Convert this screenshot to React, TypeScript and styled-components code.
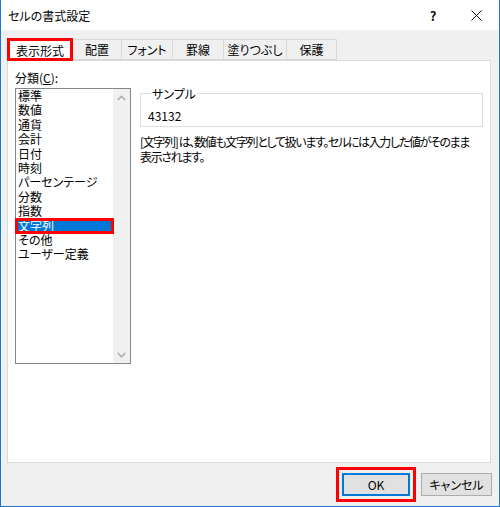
import React from "react";
import styled, { createGlobalStyle } from "styled-components";

const Global = createGlobalStyle`
  html, body { margin: 0; padding: 0; background: #ffffff; }
  body {
    font-family: "Noto Sans CJK JP", "Noto Sans", sans-serif;
    font-size: 12px;
    color: #000000;
    font-feature-settings: "palt";
  }
  * { box-sizing: border-box; }
  #root { width: 500px; height: 507px; }
`;

const Window = styled.div`
  width: 500px;
  height: 507px;
  border: 1px solid #1979d1;
  border-top: none;
  background: #f0f0f0;
  display: flex;
  flex-direction: column;
`;

const TitleBar = styled.div`
  height: 30px;
  flex: none;
  background: #ffffff;
  display: flex;
  align-items: center;
  padding-left: 7px;
`;

const Title = styled.div`
  flex: 1;
  line-height: 15px;
`;

const CaptionButton = styled.div<{ $w: number }>`
  width: ${(p) => p.$w}px;
  height: 30px;
  display: flex;
  align-items: center;
  justify-content: center;
  font-size: 13px;
  font-weight: 700;
  color: #111;
`;

const Content = styled.div`
  flex: 1;
  display: flex;
  flex-direction: column;
  padding: 8px 8px 0 6px;
  min-height: 0;
`;

const TabStrip = styled.div`
  display: flex;
  align-items: flex-end;
  position: relative;
  z-index: 1;
`;

const Tab = styled.div<{ $w: number; $active?: boolean; $marked?: boolean }>`
  width: ${(p) => p.$w}px;
  height: ${(p) => (p.$active ? 23 : 21)}px;
  margin-bottom: ${(p) => (p.$active ? -1 : 0)}px;
  margin-left: -1px;
  &:first-child { margin-left: 0; }
  border: 1px solid #d9d9d9;
  border-bottom: ${(p) => (p.$active ? "none" : "1px solid #d9d9d9")};
  background: ${(p) => (p.$active ? "#ffffff" : "#f0f0f0")};
  position: relative;
  z-index: ${(p) => (p.$active ? 2 : 1)};
  display: flex;
  align-items: center;
  justify-content: center;
  line-height: 15px;
  outline: ${(p) => (p.$marked ? "3px solid #ff0000" : "none")};
  outline-offset: -3px;
`;

const Panel = styled.div`
  flex: 1;
  background: #ffffff;
  border: 1px solid #d9d9d9;
  display: flex;
  gap: 9px;
  padding: 9px 7px 0 7px;
`;

const LeftColumn = styled.div`
  flex: none;
  width: 116px;
  display: flex;
  flex-direction: column;
`;

const FieldLabel = styled.div`
  line-height: 15px;
  height: 15px;
  margin-bottom: 3px;
`;

const ListBox = styled.div`
  height: 276px;
  border: 1px solid #828790;
  background: #ffffff;
  display: flex;
`;

const ListItems = styled.div`
  flex: 1;
  display: flex;
  flex-direction: column;
`;

const ListItem = styled.div<{ $selected?: boolean; $marked?: boolean }>`
  height: 14.4px;
  line-height: 14.4px;
  padding-left: 2px;
  white-space: nowrap;
  background: ${(p) => (p.$selected ? "#0078d7" : "transparent")};
  color: ${(p) => (p.$selected ? "#ffffff" : "#000000")};
  outline: ${(p) => (p.$marked ? "3px solid #ff0000" : "none")};
  outline-offset: -2px;
  position: relative;
`;

const ScrollTrack = styled.div`
  width: 17px;
  background: #f0f0f0;
  display: flex;
  flex-direction: column;
  justify-content: space-between;
`;

const ScrollArrow = styled.div`
  width: 17px;
  height: 17px;
  display: flex;
  align-items: center;
  justify-content: center;
`;

const RightColumn = styled.div`
  flex: 1;
  min-width: 0;
  padding-top: 16px;
  display: flex;
  flex-direction: column;
`;

const GroupBox = styled.fieldset`
  margin: 0;
  min-width: 0;
  border: 1px solid #dcdcdc;
  padding: 7px 6px 3px 7px;
`;

const GroupTitle = styled.legend`
  padding: 0 1px;
  margin-left: 3px;
  line-height: 15px;
`;

const SampleValue = styled.div`
  line-height: 15px;
`;

const Description = styled.div`
  margin-top: 7px;
  line-height: 15px;
  white-space: nowrap;
  letter-spacing: -1.35px;
`;

const Footer = styled.div`
  height: 43px;
  flex: none;
  display: flex;
  justify-content: flex-end;
  align-items: flex-start;
  padding: 10px 7px 0 0;
  gap: 11px;
`;

const Button = styled.button<{ $w: number; $default?: boolean; $marked?: boolean }>`
  width: ${(p) => p.$w}px;
  height: 23px;
  margin: 0;
  padding: 0;
  font: inherit;
  color: #000;
  background: #e1e1e1;
  border: 1px solid ${(p) => (p.$default ? "#0078d7" : "#adadad")};
  box-shadow: ${(p) => (p.$default ? "inset 0 0 0 1px #0078d7" : "none")};
  outline: ${(p) => (p.$marked ? "3px solid #ff0000" : "none")};
  outline-offset: 3px;
  line-height: 15px;
`;

const Chevron = ({ up }: { up?: boolean }) => (
  <svg width="9" height="6" viewBox="0 0 9 6">
    <polyline
      points={up ? "0.8,5 4.5,1.3 8.2,5" : "0.8,1 4.5,4.7 8.2,1"}
      fill="none"
      stroke="#a8a8a8"
      strokeWidth="1.4"
    />
  </svg>
);

const CloseGlyph = () => (
  <svg width="11" height="11" viewBox="0 0 11 11">
    <path d="M0.5 0.5 L10.5 10.5 M10.5 0.5 L0.5 10.5" stroke="#111" strokeWidth="1" />
  </svg>
);

const tabs = [
  { label: "表示形式", w: 66 },
  { label: "配置", w: 50 },
  { label: "フォント", w: 52 },
  { label: "罫線", w: 52 },
  { label: "塗りつぶし", w: 64 },
  { label: "保護", w: 51 },
];

const categories = [
  "標準",
  "数値",
  "通貨",
  "会計",
  "日付",
  "時刻",
  "パーセンテージ",
  "分数",
  "指数",
  "文字列",
  "その他",
  "ユーザー定義",
];

export default function App() {
  const selected = "文字列";
  return (
    <>
      <Global />
      <Window>
        <TitleBar>
          <Title>セルの書式設定</Title>
          <CaptionButton $w={40}>?</CaptionButton>
          <CaptionButton $w={46}>
            <CloseGlyph />
          </CaptionButton>
        </TitleBar>
        <Content>
          <TabStrip>
            {tabs.map((t, i) => (
              <Tab key={t.label} $w={t.w} $active={i === 0} $marked={i === 0}>
                {t.label}
              </Tab>
            ))}
          </TabStrip>
          <Panel>
            <LeftColumn>
              <FieldLabel>
                分類(<u>C</u>):
              </FieldLabel>
              <ListBox>
                <ListItems>
                  {categories.map((c) => (
                    <ListItem key={c} $selected={c === selected} $marked={c === selected}>
                      {c}
                    </ListItem>
                  ))}
                </ListItems>
                <ScrollTrack>
                  <ScrollArrow>
                    <Chevron up />
                  </ScrollArrow>
                  <ScrollArrow>
                    <Chevron />
                  </ScrollArrow>
                </ScrollTrack>
              </ListBox>
            </LeftColumn>
            <RightColumn>
              <GroupBox>
                <GroupTitle>サンプル</GroupTitle>
                <SampleValue>43132</SampleValue>
              </GroupBox>
              <Description>
                [文字列] は、数値も文字列として扱います。セルには入力した値がそのまま
                <br />
                表示されます。
              </Description>
            </RightColumn>
          </Panel>
        </Content>
        <Footer>
          <Button $w={68} $default $marked>
            OK
          </Button>
          <Button $w={71}>キャンセル</Button>
        </Footer>
      </Window>
    </>
  );
}
